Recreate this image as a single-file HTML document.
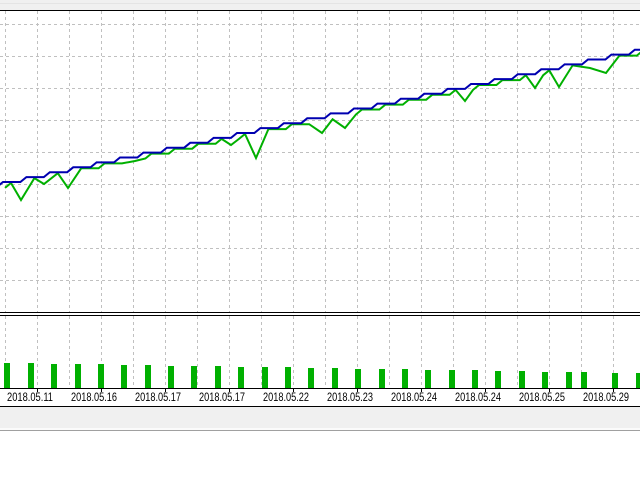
<!DOCTYPE html>
<html><head><style>
html,body{margin:0;padding:0;width:640px;height:480px;overflow:hidden;background:#fff;font-family:Tahoma,"DejaVu Sans","Liberation Sans",sans-serif;}
</style></head><body>
<svg id="s" width="640" height="480" xmlns="http://www.w3.org/2000/svg" style="position:absolute;left:0;top:0">
<rect x="0" y="0" width="640" height="10" fill="#f0f0f0"/>
<rect x="0" y="3" width="640" height="1" fill="#e4e4e4"/>
<rect x="0" y="10" width="640" height="1" fill="#000"/>
<g id="grid" stroke="#c0c0c0" stroke-width="1" stroke-dasharray="3,3" shape-rendering="crispEdges"></g>
<rect x="0" y="312" width="640" height="1" fill="#000"/>
<rect x="0" y="315" width="640" height="1" fill="#000"/>
<g id="bars" fill="#00b000" shape-rendering="crispEdges"></g>
<rect x="0" y="388" width="640" height="1" fill="#000"/>
<g id="ticks" fill="#000" shape-rendering="crispEdges"></g>
<g id="labels" font-size="12" fill="#000" font-family="Liberation Sans, sans-serif"></g>
<rect x="0" y="406" width="640" height="1" fill="#000"/>
<rect x="0" y="407" width="640" height="21" fill="#f0f0f0"/>
<rect x="0" y="428" width="640" height="2" fill="#fbfbfb"/>
<rect x="0" y="430" width="640" height="1" fill="#a0a0a0"/>
<polyline id="g" fill="none" stroke="#00b000" stroke-width="2"/>
<polyline id="b" fill="none" stroke="#0000b0" stroke-width="2"/>
</svg>
<script>
var NS="http://www.w3.org/2000/svg";
function el(p,t,a){var e=document.createElementNS(NS,t);for(var k in a)e.setAttribute(k,a[k]);document.getElementById(p).appendChild(e);return e;}
for(var x=5;x<640;x+=32){el("grid","line",{x1:x+.5,y1:11,x2:x+.5,y2:312});el("grid","line",{x1:x+.5,y1:316,x2:x+.5,y2:388});}
for(var y=24;y<312;y+=32){el("grid","line",{x1:0,y1:y+.5,x2:640,y2:y+.5});}
var bx=[4,28,51,75,98,121,145,168,191,215,238,262,285,308,332,355,379,402,425,449,472,495,519,542,566,581,612,636];
bx.forEach(function(x,i){var top=Math.round(363+i*10/27);el("bars","rect",{x:x,y:top,width:6,height:388-top});});
for(var x=37;x<640;x+=64){el("ticks","rect",{x:x,y:389,width:1,height:3});}
var L=["2018.05.11","2018.05.16","2018.05.17","2018.05.17","2018.05.22","2018.05.23","2018.05.24","2018.05.24","2018.05.25","2018.05.29"];
L.forEach(function(t,i){var e=el("labels","text",{x:7+i*64,y:401,textLength:46,lengthAdjust:"spacingAndGlyphs"});e.textContent=t;});
var pb=[];var step=23.4,rise=4.9;
for(var k=0;k<29;k++){var x0=k*step-3;var yv=182-k*rise;pb.push(x0+","+(yv+rise));pb.push((x0+6)+","+yv);pb.push((x0+step)+","+yv);}
document.getElementById("b").setAttribute("points",pb.join(" "));
var dips={21:200,44:184,68:188,135:161,231:145,256:158,322:133,345:128,465:101,535:88,559:87,590:68,606:73};
var pg=[];
for(var k=0;k<29;k++){var x0=k*step+5;var yv=182-k*rise+1;pg.push([x0,yv+rise]);pg.push([x0+6,yv]);pg.push([x0+step,yv]);}
Object.keys(dips).forEach(function(k){pg.push([+k,dips[k]]);});
pg.sort(function(a,b){return a[0]-b[0];});
var fin=[];pg.forEach(function(p){var near=false;Object.keys(dips).forEach(function(k){if(p[1]!=dips[k]&&Math.abs(p[0]-k)<8)near=true;});if(!near)fin.push(p);});
document.getElementById("g").setAttribute("points",fin.map(function(p){return p[0]+","+p[1];}).join(" "));
</script>
</body></html>
